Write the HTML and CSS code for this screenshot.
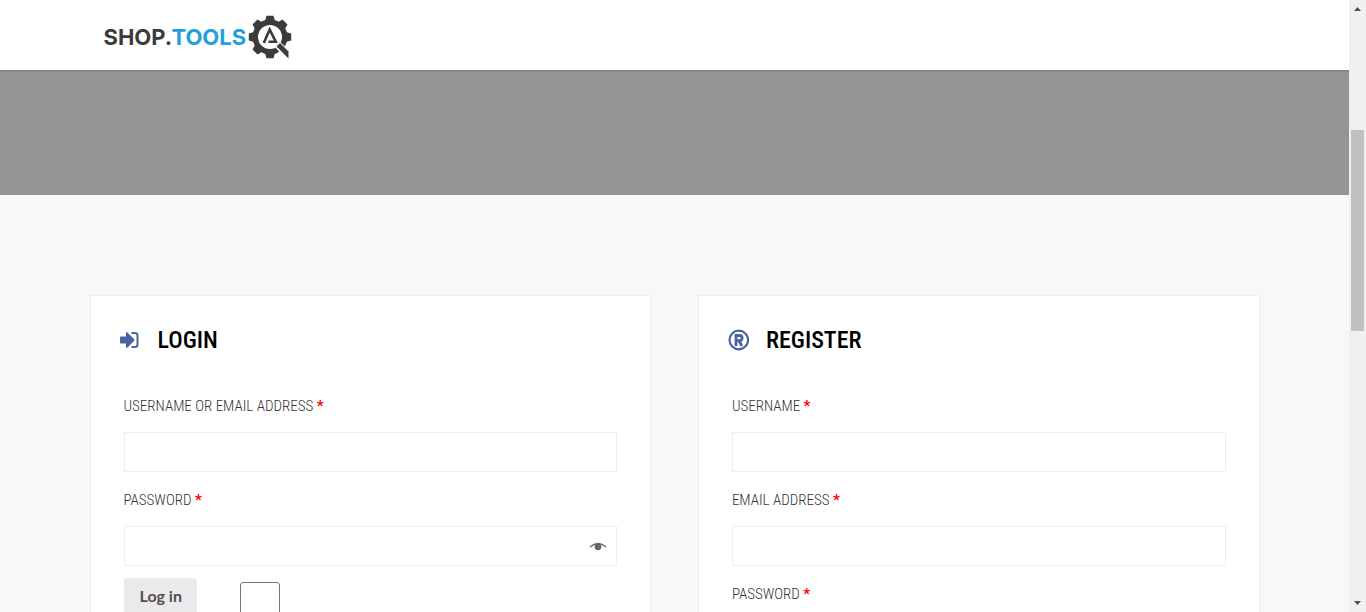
FILE: index.html
```html
<!DOCTYPE html>
<html lang="en">
<head>
<meta charset="utf-8">
<meta name="viewport" content="width=device-width, initial-scale=1">
<title>Shop.Tools - My account</title>
<link rel="stylesheet" href="styles.css">
</head>
<body>
<div class="window">
  <div class="page">
    <header class="site-header">
      <div class="container header-inner">
        <a class="logo" href="#" aria-label="Shop.Tools">
          <span class="logo-text">SHOP.<span class="logo-accent">TOOLS</span></span>
          <svg class="logo-mark" viewBox="0 0 44 44" aria-hidden="true">
            <g fill="#3b3b3b">
              <circle cx="22" cy="22" r="17.5"/>
              <path d="M17 6l1.500-5.200h7L27 6z"/>
              <path d="M17 6l1.500-5.200h7L27 6z" transform="rotate(45 22 22)"/>
              <path d="M17 6l1.500-5.200h7L27 6z" transform="rotate(90 22 22)"/>
              <path d="M17 6l1.500-5.200h7L27 6z" transform="rotate(180 22 22)"/>
              <path d="M17 6l1.500-5.200h7L27 6z" transform="rotate(225 22 22)"/>
              <path d="M17 6l1.500-5.200h7L27 6z" transform="rotate(270 22 22)"/>
              <path d="M17 6l1.500-5.200h7L27 6z" transform="rotate(315 22 22)"/>
            </g>
            <circle cx="22" cy="22" r="12" fill="#fff"/>
            <path d="M26 31l5-5 13 12v6h-6z" fill="#fff"/>
            <path d="M28.500 31.500l3.500-3.500L40.500 36.500v7z" fill="#3b3b3b"/>
            <path d="M15.800 28L21.700 14.500L27.800 26.800H20.500" fill="none" stroke="#3b3b3b" stroke-width="2.600"/>
          </svg>
        </a>
      </div>
    </header>
    <div class="banner"></div>
    <main class="container account">
      <section class="card">
        <h2 class="card-title">
          <svg class="title-icon" viewBox="0 0 22 22" aria-hidden="true">
            <path d="M1 8.500Q1 7.500 2 7.500H7V4Q7.200 2.500 8.500 3.400L15 10Q15.700 11 15 12L8.500 18.600Q7.200 19.500 7 18V14.500H2Q1 14.500 1 13.500z" fill="#4862a3"/>
            <path d="M12.500 4H16Q18.500 4 18.500 6.500V15.500Q18.500 18 16 18H12.500" fill="none" stroke="#4862a3" stroke-width="2"/>
          </svg>
          Login
        </h2>
        <form class="form">
          <label class="label" for="login-user">Username or email address <span class="required">*</span></label>
          <input class="field" id="login-user" type="text">
          <label class="label" for="login-pass">Password <span class="required">*</span></label>
          <div class="password">
            <input class="field" id="login-pass" type="password">
            <button class="reveal" type="button" aria-label="Show password">
              <svg viewBox="0 0 18 10" width="18" height="10" aria-hidden="true">
                <path d="M1 6Q9-1 17 6" fill="none" stroke="#666" stroke-width="1.500"/>
                <circle cx="9" cy="5.800" r="3.400" fill="#666"/>
              </svg>
            </button>
          </div>
          <div class="actions">
            <button class="submit" type="button">Log in</button>
            <input class="remember" type="checkbox" aria-label="Remember me">
          </div>
        </form>
      </section>
      <section class="card">
        <h2 class="card-title">
          <svg class="title-icon" viewBox="0 0 22 22" fill="none" stroke="#4862a3" aria-hidden="true">
            <circle cx="11.800" cy="11" r="9.300" stroke-width="2.200"/>
            <path d="M9 17V6.500H12.500A2.600 2.600 0 0 1 12.500 11.700H9M12 11.500L14.800 17" stroke-width="2.800"/>
          </svg>
          Register
        </h2>
        <form class="form">
          <label class="label" for="reg-user">Username <span class="required">*</span></label>
          <input class="field" id="reg-user" type="text">
          <label class="label" for="reg-email">Email address <span class="required">*</span></label>
          <input class="field" id="reg-email" type="email">
          <label class="label" for="reg-pass">Password <span class="required">*</span></label>
          <input class="field" id="reg-pass" type="password">
        </form>
      </section>
    </main>
  </div>
  <div class="scrollbar" aria-hidden="true">
    <svg class="arrow" viewBox="0 0 17 17"><path d="M5 11h7L8.500 7z" fill="#505050"/></svg>
    <div class="track"><div class="thumb"></div></div>
    <svg class="arrow" viewBox="0 0 17 17"><path d="M5 6h7l-3.500 4z" fill="#505050"/></svg>
  </div>
</div>
</body>
</html>
```

FILE: styles.css
```css
* { box-sizing: border-box; }

body {
  margin: 0;
  background: #f8f8f8;
  color: #333;
  font-family: "Roboto Condensed", Roboto, sans-serif;
}

.window {
  display: flex;
  height: 100vh;
  overflow: hidden;
}

.page { flex: 1; min-width: 0; }

.container {
  width: 100%;
  max-width: 1170px;
  margin: 0 auto;
}

.site-header {
  position: relative;
  background: #fff;
  box-shadow: 0 1px 2px rgba(0, 0, 0, 0.2);
}

.header-inner { padding: 15px 14px 11px; }

.logo {
  display: flex;
  align-items: center;
  gap: 2px;
  width: fit-content;
  text-decoration: none;
}

.logo-text {
  color: #3b3b3b;
  font: 700 22px/44px Inter, sans-serif;
}

.logo-accent { color: #23a0dc; }

.logo-mark { width: 44px; height: 44px; }

.banner { height: 125px; background: #959595; }

.account {
  display: grid;
  grid-template-columns: 1fr 1fr;
  gap: 4%;
  padding-top: 100px;
}

.card {
  padding: 28px 0 40px;
  border: 1px solid #eee;
  background: #fff;
}

.card-title {
  display: flex;
  align-items: center;
  gap: 17px;
  margin: 0 28px 38px;
  color: #000;
  font-size: 24px;
  font-weight: 500;
  line-height: 32px;
  text-transform: uppercase;
}

.title-icon { width: 22px; height: 22px; }

.form { padding: 0 33px; }

.label {
  display: block;
  margin-bottom: 14px;
  font-size: 15px;
  font-weight: 300;
  line-height: 24px;
  text-transform: uppercase;
}

.required { color: #f00; font-weight: 700; }

.field {
  display: block;
  width: 100%;
  height: 40px;
  margin-bottom: 16px;
  padding: 0 12px;
  border: 1px solid #eee;
  background: #fff;
}

.password { position: relative; }

.reveal {
  position: absolute;
  top: 0;
  right: 10px;
  display: flex;
  align-items: center;
  height: 40px;
  padding: 0;
  border: 0;
  background: none;
}

.password .field { margin-bottom: 12px; }

.actions {
  display: flex;
  align-items: flex-start;
  gap: 43px;
}

.submit {
  padding: 10px 15px 10px 16px;
  border: 0;
  border-radius: 3px;
  background: #ebe9eb;
  color: #515151;
  font: 700 16px/16px Lato, sans-serif;
}

.remember {
  appearance: none;
  width: 40px;
  height: 40px;
  margin: 4px 0 0;
  border: 1px solid #767676;
  border-radius: 3px;
  background: #fff;
}

.scrollbar {
  position: relative;
  display: flex;
  flex-direction: column;
  width: 17px;
  background: #f0f0f0;
}

.arrow { width: 17px; height: 17px; }

.track { flex: 1; padding: 113px 2px 0; }

.thumb { height: 201px; background: #c1c1c1; }
```
